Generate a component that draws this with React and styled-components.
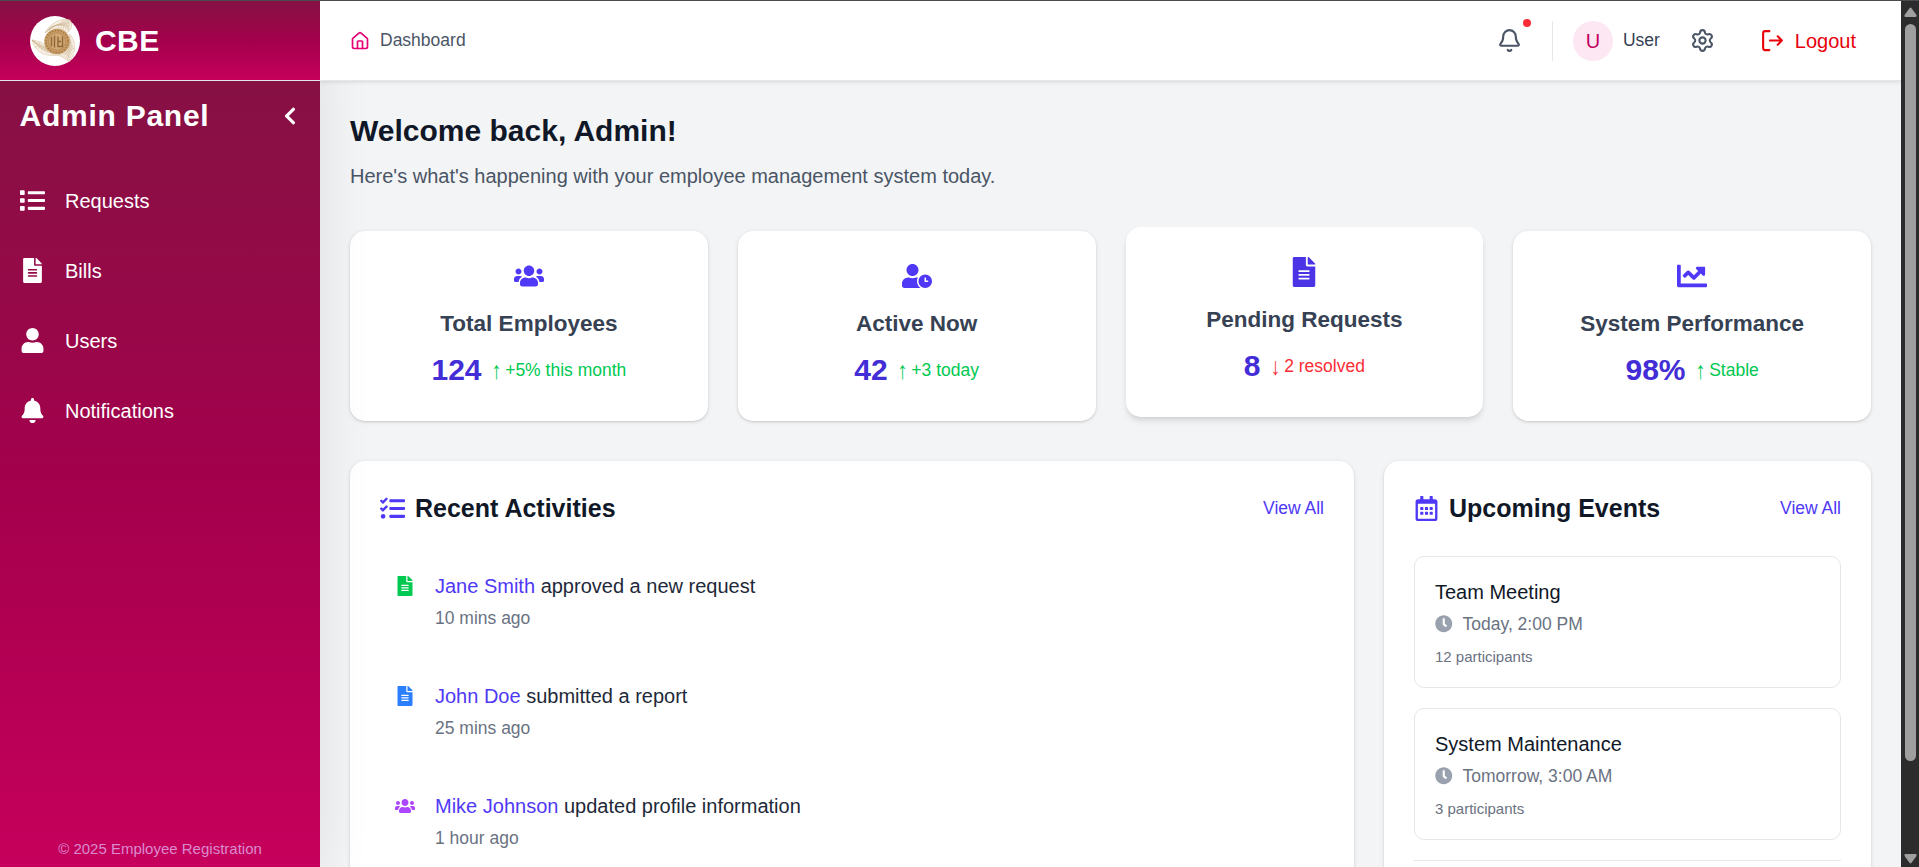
import React from "react";
import styled, { createGlobalStyle } from "styled-components";
import { FaList, FaFileAlt, FaUser, FaBell, FaChevronLeft, FaUsers, FaUserClock, FaChartLine, FaTasks, FaRegCalendarAlt, FaClock } from "react-icons/fa";
import { House, Bell, Settings } from "lucide-react";

const Global = createGlobalStyle`
  *, *::before, *::after { box-sizing: border-box; }
  html { font-size: 20px; }
  body { margin: 0; overflow: hidden; background: #f3f4f6; color: #101828; font-family: "Liberation Sans", Arial, sans-serif; line-height: 1.5; }
  h1, h2, h3, p { margin: 0; }
  svg { display: block; flex-shrink: 0; }
`;

const gradient = "linear-gradient(to bottom in oklab, #861043, #a3004c, #c6005c)";

const Screen = styled.div`
  display: grid;
  grid-template-columns: 320px minmax(0, 1fr) 18px;
  width: 100vw;
  height: 867px;
  border-top: 1px solid #4a4a50;
  overflow: hidden;
`;
const Side = styled.aside`
  display: flex;
  flex-direction: column;
  min-height: 0;
  position: relative;
  z-index: 1;
  box-shadow: 0 25px 62px -15px rgba(0, 0, 0, 0.14);
`;
const Brand = styled.div`
  height: 80px;
  display: flex;
  align-items: center;
  gap: 15px;
  padding-left: 30px;
  background: ${gradient};
  border-bottom: 1px solid #e5e7eb;
  color: #fff;
  font-size: 30px;
  font-weight: 700;
  letter-spacing: 0.4px;
`;
const Nav = styled.nav`
  flex: 1;
  display: flex;
  flex-direction: column;
  background: ${gradient};
  color: #fff;
`;
const NavTitle = styled.div`
  display: flex;
  align-items: center;
  justify-content: space-between;
  padding: 0 20px;
  height: 70px;
  font-size: 30px;
  font-weight: 700;
  letter-spacing: 0.75px;
  span { margin: 0 0 2px -0.5px; }
`;
const NavList = styled.div`
  display: flex;
  flex-direction: column;
  gap: 10px;
  padding-top: 19.5px;
`;
const NavItem = styled.a`
  display: flex;
  align-items: center;
  gap: 20px;
  height: 60px;
  padding: 0 20px;
  font-size: 20px;
`;
const Copyright = styled.div`
  margin-top: auto;
  padding-bottom: 8px;
  text-align: center;
  font-size: 15px;
  line-height: 20px;
  color: #da8bcf;
`;

const Page = styled.div`
  display: flex;
  flex-direction: column;
  min-width: 0;
  height: 866px;
  overflow: hidden;
`;
const TopBar = styled.header`
  flex: none;
  position: relative;
  z-index: 2;
  display: flex;
  align-items: center;
  justify-content: space-between;
  height: 80px;
  padding: 0 30px;
  background: #fff;
  border-bottom: 1px solid #e5e7eb;
  box-shadow: 0 1px 4px rgba(0, 0, 0, 0.12);
`;
const Crumb = styled.div`
  display: flex;
  align-items: center;
  gap: 10px;
  font-size: 17.5px;
  line-height: 25px;
  color: #4a5565;
  svg { color: #e60076; }
  span { margin-bottom: 1px; }
`;
const Actions = styled.div`
  display: flex;
  align-items: center;
  color: #4a5565;
`;
const Alert = styled.div`
  position: relative;
  padding: 10px;
`;
const Dot = styled.span`
  position: absolute;
  top: 1px;
  right: 1px;
  width: 8px;
  height: 8px;
  border-radius: 50%;
  background: #fb2c36;
`;
const Rule = styled.div`
  width: 1px;
  height: 40px;
  margin: 0 20px;
  background: #e5e7eb;
`;
const Avatar = styled.div`
  width: 40px;
  height: 40px;
  border-radius: 50%;
  display: grid;
  place-items: center;
  background: #fce7f3;
  color: #c6005c;
  font-size: 20px;
`;
const UserName = styled.span`
  margin: 0 30px 1px 10px;
  font-size: 17.5px;
  line-height: 25px;
  color: #364153;
`;
const Logout = styled.button`
  display: flex;
  align-items: center;
  gap: 10px;
  margin-left: 45px;
  padding: 0 15px 0 0;
  border: 0;
  background: none;
  color: #e7000b;
  font: 20px/30px "Liberation Sans", Arial, sans-serif;
`;

const Main = styled.main`
  flex: none;
  padding: 30px;
`;
const Title = styled.h1`
  font-size: 30px;
  line-height: 39px;
  padding-bottom: 1px;
  font-weight: 700;
`;
const Lead = styled.p`
  margin-top: 10px;
  font-size: 20px;
  line-height: 30px;
  color: #4a5565;
`;
const Stats = styled.div`
  display: grid;
  grid-template-columns: repeat(4, minmax(0, 1fr));
  gap: 30px;
  margin-top: 40px;
`;
const Card = styled.section`
  background: #fff;
  border-radius: 15px;
  box-shadow: 0 1px 4px rgba(0, 0, 0, 0.1), 0 1px 2px rgba(0, 0, 0, 0.1);
`;
const Stat = styled(Card)`
  height: 190px;
  padding: 30px;
  display: flex;
  flex-direction: column;
  align-items: center;
  svg { color: ${(p) => (p.$raised ? "#4a34e6" : "#4f39f6")}; }
  ${(p) => p.$raised && "transform: translateY(-4px); box-shadow: 0 5px 7px -1px rgba(0,0,0,.1), 0 2px 5px -2px rgba(0,0,0,.1);"}
`;
const StatName = styled.h3`
  margin-top: 15px;
  font-size: 22.5px;
  line-height: 35px;
  font-weight: 600;
  color: #364153;
`;
const StatLine = styled.div`
  display: flex;
  align-items: center;
  gap: 10px;
  margin-top: 9px;
`;
const Value = styled.span`
  font-size: 30px;
  line-height: 40px;
  font-weight: 700;
  color: #432dd7;
`;
const Trend = styled.span`
  font-size: 17.5px;
  line-height: 25px;
  white-space: pre;
  color: ${(p) => (p.$down ? "#fb2c36" : "#00c951")};
`;
const TrendArrow = styled.span`
  display: inline-block;
  transform: translateY(1px) scale(1.15, 1.4);
`;
const Panels = styled.div`
  display: grid;
  grid-template-columns: 1004px minmax(0, 1fr);
  gap: 30px;
  margin-top: 40px;
`;
const Panel = styled(Card)`
  padding: 30px;
  height: 600px;
`;
const PanelHead = styled.div`
  display: flex;
  align-items: center;
  height: 35px;
  gap: 10px;
  svg { color: #4f39f6; }
`;
const PanelTitle = styled.h2`
  margin-bottom: 1px;
  font-size: 25px;
  line-height: 35px;
  font-weight: 600;
`;
const ViewAll = styled.a`
  margin: 0 0 1px auto;
  font-size: 17.5px;
  line-height: 25px;
  color: #4f39f6;
`;
const Activity = styled.div`
  display: flex;
  gap: 20px;
  padding: 15px;
  height: 90px;
  margin-bottom: 20px;
`;
const Activities = styled.div`
  padding-top: 30px;
`;
const ActivityIcon = styled.div`
  padding-top: 5px;
  color: ${(p) => p.$color};
`;
const ActivityText = styled.p`
  font-size: 20px;
  line-height: 30px;
  color: #1e2939;
  span { color: #4f39f6; }
`;
const Time = styled.p`
  margin-top: 4.5px;
  font-size: 17.5px;
  line-height: 25px;
  color: #6a7282;
`;
const Events = styled.div`
  display: flex;
  flex-direction: column;
  gap: 20px;
  padding-top: 30px;
`;
const Event = styled.article`
  height: 132px;
  padding: 20px;
  border: 1px solid #e5e7eb;
  border-radius: 10px;
`;
const EventsFooter = styled.div`
  height: 60px;
  border-top: 1px solid #e5e7eb;
`;
const EventName = styled.h3`
  font-size: 20px;
  line-height: 30px;
  font-weight: 400;
`;
const When = styled.div`
  display: flex;
  align-items: center;
  gap: 10px;
  margin-top: 4.5px;
  font-size: 17.5px;
  line-height: 25px;
  color: #6a7282;
  svg { color: #99a1af; }
`;
const People = styled.p`
  margin-top: 10px;
  font-size: 15px;
  line-height: 20px;
  color: #6a7282;
`;

const Track = styled.div`
  display: flex;
  flex-direction: column;
  align-items: center;
  justify-content: space-between;
  height: 866px;
  padding: 6px 0 3px;
  background: #2c2c2c;
`;
const Thumb = styled.div`
  width: 11px;
  height: 737px;
  margin: 7px 0 auto;
  border-radius: 6px;
  background: #9f9f9f;
`;
const Arrow = styled.svg`
  fill: #9f9f9f;
  transform: ${(p) => (p.$down ? "rotate(180deg)" : "none")};
`;

const Logo = () => (
  <svg width="50" height="50" viewBox="0 0 50 50">
    <circle cx="25" cy="25" r="25" fill="#fff" />
    <g fill="#f7f1e7" stroke="#c9b08a" strokeWidth=".45">
      <path d="M15 17C19 8 31 1 40 4C43 8 42 13 37 17C31 11 22 10 15 17Z" />
      <path d="M2 24C6 25 10 25 14 28C15 33 20 38 27 39C17 41 5 37 2 24Z" />
      <path d="M39 18C46 23 47 37 39 46C36 43 32 40 27 39C35 38 42 29 39 18Z" />
    </g>
    <g fill="none" stroke="#c4a87e" strokeWidth=".4">
      {[0, 1, 2, 3, 4].map((i) => (
        <g key={i}>
          <path d={`M${15 + i} ${17 - i}C${22 + i} ${10 - i} ${32 + i} ${5 + i} ${41 - i / 2} ${6 + i * 2}`} />
          <path d={`M${28 + i * 2.5} ${12 + i * 0.8}Q${30 + i * 2} 6 ${34 + i * 1.5} 3.5`} />
          <path d={`M2 24Q${7 + i} ${27 + i * 2} ${16 + i * 2} ${32 + i * 1.5}`} />
          <path d={`M${5 + i * 3} ${31 + i * 1.5}Q${9 + i * 2} 31 ${10 + i * 2} ${26 + i * 2}`} />
          <path d={`M${40 + i} ${20 + i * 3}Q${42 - i} 34 ${29 + i * 2.2} ${39 + i * 1.3}`} />
          <path d={`M${34 + i} ${37 - i * 3}Q${40 + i} ${38 - i} ${39 + i} ${45 - i * 3}`} />
        </g>
      ))}
    </g>
    <circle cx="27" cy="25.5" r="12.8" fill="#c79c66" />
    <circle cx="27" cy="25.5" r="11" fill="none" stroke="#a2763f" strokeWidth="1.6" strokeDasharray="1.3 1.6" />
    <circle cx="27" cy="25.5" r="8.5" fill="#d2aa76" stroke="#b58850" strokeWidth=".8" />
    <path d="M21.5 21v9M24.5 19.5v12M28 20.5v10h4.5v-10M28 25.5h3" fill="none" stroke="#8f6737" strokeWidth="1.4" />
  </svg>
);

const LogoutIcon = () => (
  <svg width="25" height="25" viewBox="0 0 24 24" fill="none" stroke="currentColor" strokeWidth="2" strokeLinecap="round" strokeLinejoin="round">
    <path d="M9 21.2H5a2 2 0 0 1-2-2V5a2 2 0 0 1 2-2h4" />
    <path d="m17 16 4-4-4-4M21 12H9.5" />
  </svg>
);

const nav = [["Requests", FaList], ["Bills", FaFileAlt], ["Users", FaUser], ["Notifications", FaBell]];
const stats = [
  { name: "Total Employees", icon: FaUsers, value: "124", trend: "+5% this month" },
  { name: "Active Now", icon: FaUserClock, value: "42", trend: "+3 today" },
  { name: "Pending Requests", icon: FaFileAlt, value: "8", trend: "2 resolved", down: true, raised: true },
  { name: "System Performance", icon: FaChartLine, value: "98%", trend: "Stable" },
];
const activities = [
  { who: "Jane Smith", what: "approved a new request", time: "10 mins ago", icon: FaFileAlt, color: "#00c951" },
  { who: "John Doe", what: "submitted a report", time: "25 mins ago", icon: FaFileAlt, color: "#2b7fff" },
  { who: "Mike Johnson", what: "updated profile information", time: "1 hour ago", icon: FaUsers, color: "#ad46ff" },
];
const events = [
  { name: "Team Meeting", when: "Today, 2:00 PM", people: "12 participants" },
  { name: "System Maintenance", when: "Tomorrow, 3:00 AM", people: "3 participants" },
];

export default function App() {
  return (
    <Screen>
      <Global />
      <Side>
        <Brand><Logo />CBE</Brand>
        <Nav>
          <NavTitle><span>Admin Panel</span><FaChevronLeft size={20} /></NavTitle>
          <NavList>
            {nav.map(([label, Icon]) => <NavItem key={label}><Icon size={25} />{label}</NavItem>)}
          </NavList>
          <Copyright>© 2025 Employee Registration</Copyright>
        </Nav>
      </Side>
      <Page>
        <TopBar>
          <Crumb><House size={20} /><span>Dashboard</span></Crumb>
          <Actions>
            <Alert><Bell size={25} /><Dot /></Alert>
            <Rule />
            <Avatar>U</Avatar>
            <UserName>User</UserName>
            <Settings size={25} />
            <Logout><LogoutIcon />Logout</Logout>
          </Actions>
        </TopBar>
        <Main>
          <Title>Welcome back, Admin!</Title>
          <Lead>Here's what's happening with your employee management system today.</Lead>
          <Stats>
            {stats.map(({ name, icon: Icon, value, trend, down, raised }) => (
              <Stat key={name} $raised={raised}>
                <Icon size={30} />
                <StatName>{name}</StatName>
                <StatLine>
                  <Value>{value}</Value>
                  <Trend $down={down}><TrendArrow>{down ? "↓" : "↑"}</TrendArrow> {trend}</Trend>
                </StatLine>
              </Stat>
            ))}
          </Stats>
          <Panels>
            <Panel>
              <PanelHead><FaTasks size={25} /><PanelTitle>Recent Activities</PanelTitle><ViewAll>View All</ViewAll></PanelHead>
              <Activities>
                {activities.map(({ who, what, time, icon: Icon, color }) => (
                  <Activity key={who}>
                    <ActivityIcon $color={color}><Icon size={20} /></ActivityIcon>
                    <div><ActivityText><span>{who}</span> {what}</ActivityText><Time>{time}</Time></div>
                  </Activity>
                ))}
              </Activities>
            </Panel>
            <Panel>
              <PanelHead><FaRegCalendarAlt size={25} /><PanelTitle>Upcoming Events</PanelTitle><ViewAll>View All</ViewAll></PanelHead>
              <Events>
                {events.map((e) => (
                  <Event key={e.name}>
                    <EventName>{e.name}</EventName>
                    <When><FaClock size={17.5} />{e.when}</When>
                    <People>{e.people}</People>
                  </Event>
                ))}
                <EventsFooter />
              </Events>
            </Panel>
          </Panels>
        </Main>
      </Page>
      <Track>
        <Arrow width="13" height="10" viewBox="0 0 13 10"><path d="M5.5 1.2q1-1.2 2 0L12.5 8q.5 2-1 2h-10q-1.5 0-1-2z" /></Arrow>
        <Thumb />
        <Arrow $down width="13" height="10" viewBox="0 0 13 10"><path d="M5.5 1.2q1-1.2 2 0L12.5 8q.5 2-1 2h-10q-1.5 0-1-2z" /></Arrow>
      </Track>
    </Screen>
  );
}
